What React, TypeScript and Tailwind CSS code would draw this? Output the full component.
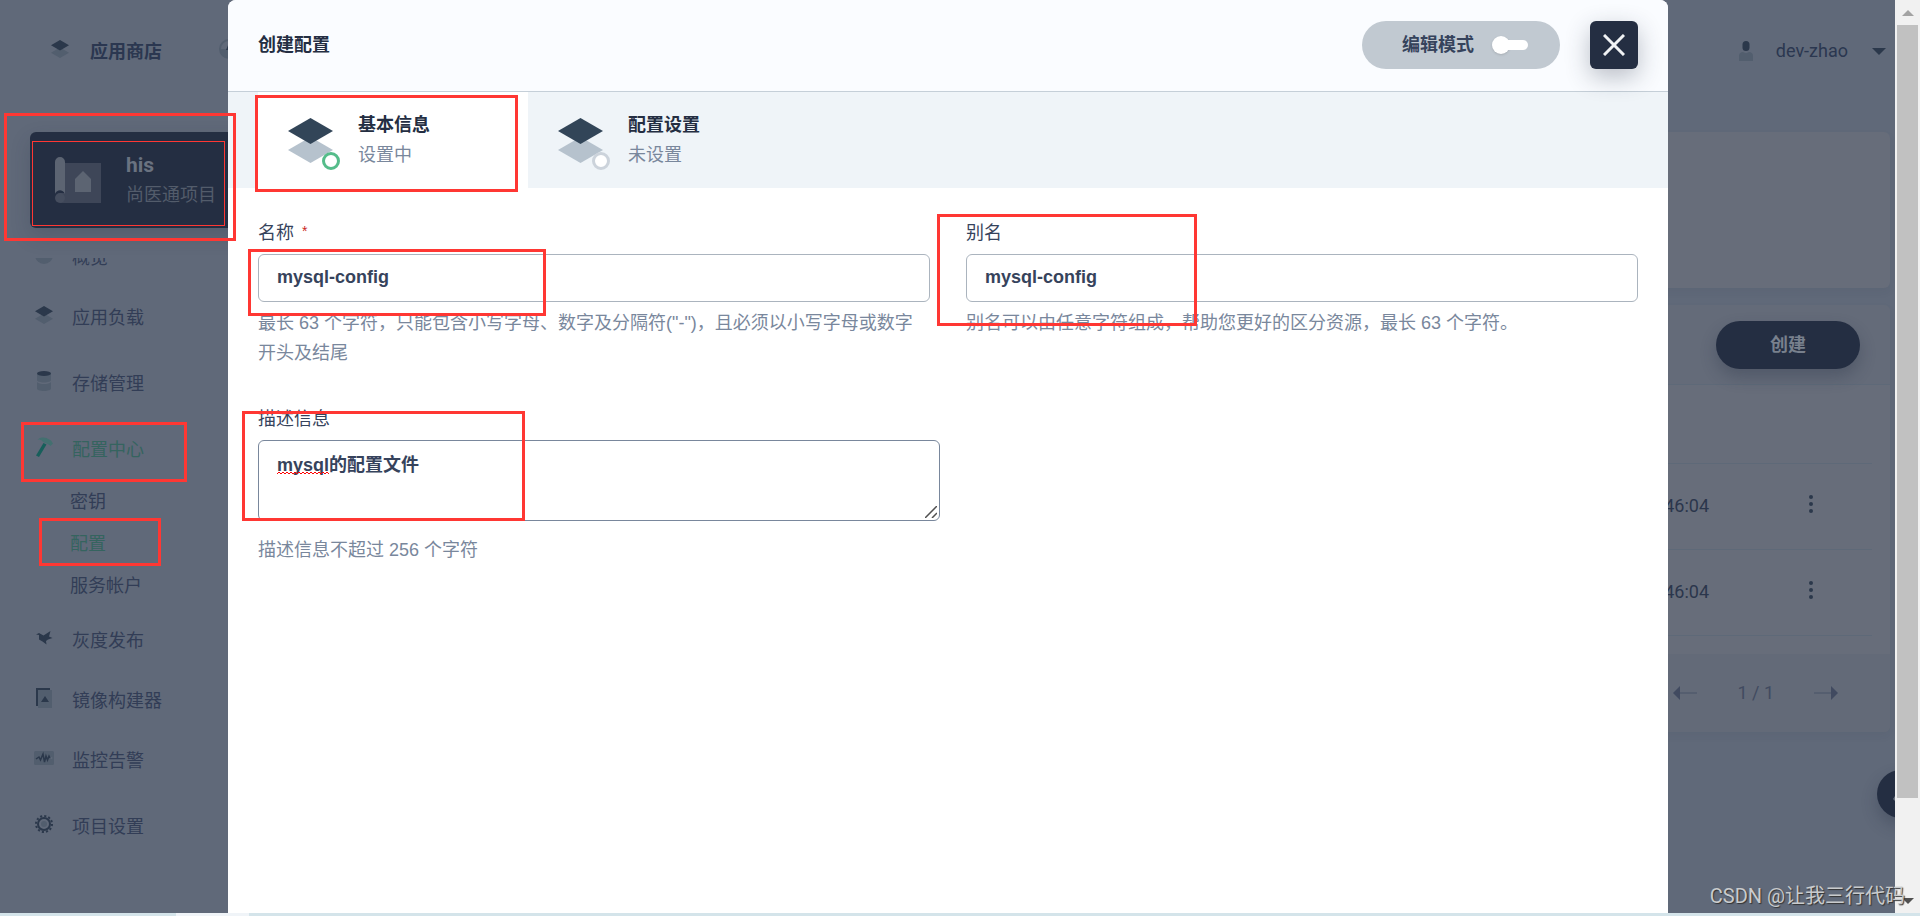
import type { ReactNode } from "react";

interface LayersProps {
  className: string;
  top: string;
  bottom: string;
}

function Layers({ className, top, bottom }: LayersProps) {
  return (
    <svg viewBox="0 0 45 45" className={className} aria-hidden="true">
      <path d="M0 32 22.5 19 45 32 22.5 45z" fill={bottom} />
      <path d="M0 13 22.5 0 45 13 22.5 26z" fill={top} />
    </svg>
  );
}

const DARK = "#2b384b";
const LIGHT = "#525e6e";

const ICONS: Record<string, ReactNode> = {
  overview: (
    <svg viewBox="0 0 20 20" className="size-5" aria-hidden="true">
      <circle cx="10" cy="10" r="9" fill={LIGHT} />
    </svg>
  ),
  storage: (
    <svg viewBox="0 0 20 20" className="size-5" aria-hidden="true">
      <path d="M3 3v6c0 1.400 3 2.500 7 2.500s7-1.100 7-2.500V3z" fill={LIGHT} />
      <path d="M3 11v6.500C3 19 6 20 10 20s7-1 7-2.500V11c-1 1.500-4 2-7 2s-6-.5-7-2z" fill={LIGHT} />
      <ellipse cx="10" cy="2.500" rx="7" ry="2.500" fill={DARK} />
    </svg>
  ),
  hammer: (
    <svg viewBox="0 0 20 20" className="size-5" aria-hidden="true">
      <path d="M9.500 6 12.500 7.500 5 20 2 18.500z" fill="#175f5b" />
      <path d="M3.500 2.500C6 0 10 0 12.500 1L17 3.500l2 3-2.500 2.500-2-1.500-5.500-2.500C8 3 6 2.500 3.500 2.500z" fill="#437070" />
    </svg>
  ),
  bird: (
    <svg viewBox="0 0 20 20" className="size-5" aria-hidden="true">
      <path d="M2 6.500 5 5l4.500 2.500L16.500 3l-1.500 5.500 3.500 1.500-4.500 1.500-2 1.500.5 3.500-4-3L5 11.500 5 7z" fill={DARK} />
    </svg>
  ),
  image: (
    <svg viewBox="0 0 20 20" className="size-5" aria-hidden="true">
      <path d="M4 2h14v18H4z" fill={LIGHT} />
      <path d="M2 0h14v2H4v16H2z" fill={DARK} />
      <path d="M11 8l4 6H7z" fill={DARK} />
    </svg>
  ),
  monitor: (
    <svg viewBox="0 0 20 20" className="size-5" aria-hidden="true">
      <rect y="3" width="20" height="14" rx="1.500" fill={LIGHT} />
      <path d="M2 11l3-2 1.500 3L9 6l1.500 8L12 8l1.500 4L15 8l1 2" fill="none" stroke={DARK} strokeWidth="1.500" />
      <circle cx="17.500" cy="10" r="1" fill="#606979" />
    </svg>
  ),
  gear: (
    <svg viewBox="0 0 20 20" className="size-5" aria-hidden="true">
      <circle cx="10" cy="10" r="8" fill="none" stroke={DARK} strokeWidth="2" strokeDasharray="2.100 2.089" />
      <circle cx="10" cy="10" r="6" fill="none" stroke={DARK} strokeWidth="2" />
      <circle cx="10" cy="10" r="3" fill={LIGHT} />
    </svg>
  ),
  layers: <Layers className="size-[18px]" top={DARK} bottom={LIGHT} />,
};

interface NavItemProps {
  icon: string;
  label: string;
  active?: boolean;
}

function NavItem({ icon, label, active }: NavItemProps) {
  return (
    <a href="#" className={`flex h-[54px] items-center gap-[18px] pl-[34px] ${active ? "text-[#35645f]" : "text-[#323d56]"}`}>
      <span className="flex w-5 justify-center pb-[6px]">{ICONS[icon]}</span>
      {label}
    </a>
  );
}

function SubItem({ label, active }: { label: string; active?: boolean }) {
  return (
    <a href="#" className={`flex h-[42px] items-center pl-[70px] ${active ? "text-[#35645f]" : "text-[#323d56]"}`}>
      {label}
    </a>
  );
}

function Sidebar() {
  return (
    <aside className="w-[268px] shrink-0 pt-[30px]">
      <div className="ml-[30px] flex h-24 items-center rounded-md bg-[#242e42] pl-[25px] shadow-[0_8px_20px_rgba(36,46,66,0.2)]">
        <svg viewBox="0 0 46 46" className="size-[46px]" aria-hidden="true">
          <path d="M9 6h37v40H5V36h4z" fill="#3e4658" />
          <path d="M0 40V5a5 5 0 0 1 10 0v32a5 5 0 0 0-10 3z" fill="#5c6472" />
          <circle cx="5" cy="41" r="5" fill="#454d5e" />
          <path d="M28 14l8 8v13H20V22z" fill="#5c6472" />
        </svg>
        <div className="pl-[25px]">
          <p className="text-[21px] leading-[30px] font-bold text-[#6a7280]">his</p>
          <p className="leading-[30px] text-[#535c6b]">尚医通项目</p>
        </div>
      </div>
      <nav className="mt-[30px] overflow-hidden">
        <div className="-mt-[27px] flex flex-col gap-3">
          <div className="flex flex-col gap-[6px]">
            <NavItem icon="overview" label="概览" />
            <NavItem icon="layers" label="应用负载" />
          </div>
          <NavItem icon="storage" label="存储管理" />
          <div className="flex flex-col gap-[6px]">
            <div className="pb-px">
              <NavItem icon="hammer" label="配置中心" active />
              <div className="pt-[4px]">
                <SubItem label="密钥" />
                <SubItem label="配置" active />
                <SubItem label="服务帐户" />
              </div>
            </div>
            <NavItem icon="bird" label="灰度发布" />
            <NavItem icon="image" label="镜像构建器" />
            <NavItem icon="monitor" label="监控告警" />
          </div>
          <NavItem icon="gear" label="项目设置" />
        </div>
      </nav>
    </aside>
  );
}

function TopBar() {
  return (
    <header className="flex h-[102px] items-center justify-between pr-[9px] pl-[51px]">
      <div className="flex items-center">
        <Layers className="mb-1 size-[18px]" top={DARK} bottom={LIGHT} />
        <a href="#" className="ml-[21px] pt-[2px] font-bold text-[#2b3750]">应用商店</a>
        <svg viewBox="0 0 20 20" className="mb-1 ml-[57px] size-5" aria-hidden="true">
          <circle cx="10" cy="10" r="9" fill="none" stroke={LIGHT} strokeWidth="2" />
          <path d="M1 10h18a9 9 0 0 1-18 0z" fill={LIGHT} />
          <path d="M7 11 10 4v7z" fill={DARK} />
        </svg>
      </div>
      <button type="button" className="flex items-center text-[#2b3750]">
        <svg viewBox="0 0 14 20" className="h-5 w-[14px]" aria-hidden="true">
          <rect x="3.500" y="0" width="7" height="10" rx="3.500" fill={DARK} />
          <path d="M0 20v-5c0-3 2-4 4-4 2 1.500 4 1.500 6 0 2 0 4 1 4 4v5z" fill={LIGHT} />
        </svg>
        <span className="ml-[23px]">dev-zhao</span>
        <svg viewBox="0 0 14 7" className="ml-[24px] h-[7px] w-[14px]" aria-hidden="true">
          <path d="M0 0h14L7 7z" fill={DARK} />
        </svg>
      </button>
    </header>
  );
}

function Row({ time }: { time: string }) {
  return (
    <tr className="h-[86px] border-b border-[#5e6978]">
      <td className="text-right text-[#2b364c]">{time}</td>
      <td className="w-[163px] pb-1 pl-[93px]">
        <button type="button" aria-label="更多" className="flex w-[18px] justify-center">
          <svg viewBox="0 0 4 18" className="h-[18px] w-1" fill={DARK} aria-hidden="true">
            <circle cx="2" cy="2" r="2" />
            <circle cx="2" cy="9" r="2" />
            <circle cx="2" cy="16" r="2" />
          </svg>
        </button>
      </td>
    </tr>
  );
}

function Content() {
  return (
    <main className="flex flex-1 flex-col gap-[17px] pt-[30px] pr-[5px] pl-5">
      <section className="h-[156px] rounded-md bg-[#676d7a] shadow-[0_4px_8px_rgba(36,46,66,0.06)]" />
      <section className="overflow-hidden rounded-md bg-[#676d7a] shadow-[0_4px_8px_rgba(36,46,66,0.06)]">
        <div className="flex h-20 items-center justify-end border-b border-[#5e6978] bg-[#646b79] pr-[30px]">
          <button type="button" className="h-12 w-36 rounded-full bg-[#242e42] font-bold text-[#78808d] shadow-[0_8px_16px_rgba(36,46,66,0.3)]">
            创建
          </button>
        </div>
        <div className="px-[18px] pb-[18px]">
          <table className="w-full border-collapse">
            <thead>
              <tr className="h-[78px] border-b border-[#5e6978]">
                <th />
                <th />
              </tr>
            </thead>
            <tbody>
              <Row time="46:04" />
              <Row time="46:04" />
            </tbody>
          </table>
        </div>
        <div className="flex h-[78px] items-center justify-end gap-10 bg-[#636a78] pr-[52px] text-[#414a60]">
          <button type="button" aria-label="上一页">
            <svg viewBox="0 0 24 14" className="h-[14px] w-6" aria-hidden="true">
              <path d="M0 7 7 0v14z" fill="#414a60" />
              <path d="M7 6h17v2H7z" fill="#555e6f" />
            </svg>
          </button>
          <span>1 / 1</span>
          <button type="button" aria-label="下一页">
            <svg viewBox="0 0 24 14" className="h-[14px] w-6" aria-hidden="true">
              <path d="M24 7l-7-7v14z" fill="#414a60" />
              <path d="M0 6h17v2H0z" fill="#555e6f" />
            </svg>
          </button>
        </div>
      </section>
    </main>
  );
}

interface StepProps {
  title: string;
  status: string;
  active?: boolean;
}

function Step({ title, status, active }: StepProps) {
  return (
    <button type="button" className={`flex w-[270px] items-center pl-[30px] text-left ${active ? "bg-white" : ""}`}>
      <span className="relative">
        <Layers className="size-[45px]" top="#324558" bottom="#b6c2cd" />
        <span className={`absolute -right-[7px] -bottom-[7px] size-[18px] rounded-full border-3 bg-white ${active ? "border-[#55bc8a]" : "border-[#ccd3db]"}`} />
      </span>
      <span className="flex flex-col pl-[25px] leading-[30px]">
        <span className="font-bold text-[#242e42]">{title}</span>
        <span className="text-[#79879c]">{status}</span>
      </span>
    </button>
  );
}

interface FieldProps {
  id: string;
  label: string;
  help: string;
  required?: boolean;
}

function Field({ id, label, help, required }: FieldProps) {
  return (
    <div>
      <label htmlFor={id} className="block pb-[6px] leading-[30px] text-[#36435c]">
        {label}
        {required && <span className="pl-2 align-text-top text-sm leading-4 text-[#ca2621]">*</span>}
      </label>
      <input
        id={id}
        type="text"
        defaultValue="mysql-config"
        className="block h-12 w-full rounded-md border border-[#abb4be] bg-white px-[18px] pb-[2px] font-bold text-[#36435c]"
      />
      <p className="pt-[6px] pr-3 leading-[30px] text-[#79879c]">{help}</p>
    </div>
  );
}

function CreateDialog() {
  return (
    <div role="dialog" aria-label="创建配置" className="relative flex w-[1440px] flex-col rounded-t-lg bg-white">
      <div className="flex h-[92px] items-center rounded-t-lg border-b border-[#c5cfd8] bg-[#fafcff] px-[30px] pb-px">
        <h1 className="flex-1 font-bold text-[#242e42]">创建配置</h1>
        <button type="button" className="flex h-12 w-[198px] items-center rounded-full bg-[#c1c9d1] pl-10 font-bold text-[#36435c]">
          编辑模式
          <span className="ml-[18px] flex items-center">
            <span className="size-[18px] rounded-full bg-white shadow-sm" />
            <span className="-ml-1 h-[10px] w-[22px] rounded-r-full bg-white" />
          </span>
        </button>
        <button type="button" aria-label="关闭" className="z-10 ml-[30px] flex size-12 items-center justify-center rounded-md bg-[#242e42] shadow-[0_8px_24px_rgba(36,46,66,0.3)]">
          <svg viewBox="0 0 22 22" className="size-[22px]" stroke="#f0f2f4" strokeWidth="3" aria-hidden="true">
            <path d="M1 1 21 21M21 1 1 21" />
          </svg>
        </button>
      </div>
      <div className="flex h-24 bg-[#eff4f8] px-[30px]">
        <Step title="基本信息" status="设置中" active />
        <Step title="配置设置" status="未设置" />
      </div>
      <form className="grid grid-cols-2 gap-x-9 px-[30px] pt-[30px] font-['Liberation_Sans','Noto_Sans_CJK_SC',sans-serif]">
        <Field
          id="name"
          label="名称"
          required
          help={'最长 63 个字符，只能包含小写字母、数字及分隔符("-")，且必须以小写字母或数字开头及结尾'}
        />
        <Field id="alias" label="别名" help="别名可以由任意字符组成，帮助您更好的区分资源，最长 63 个字符。" />
        <div className="pt-9">
          <label htmlFor="desc" className="block pb-[6px] leading-[30px] text-[#36435c]">
            描述信息
          </label>
          <div className="relative -mr-[10px]">
            <textarea
              id="desc"
              spellCheck={false}
              defaultValue="mysql的配置文件"
              className="block h-[81px] w-full resize-none rounded-md border border-[#79879c] bg-white px-[18px] py-[9px] leading-[30px] font-bold text-[#36435c]"
            />
            <svg viewBox="0 0 52 4" className="absolute top-[31px] left-[19px] h-1 w-[52px]" fill="none" stroke="#f00" aria-hidden="true">
              <path d="M0 3l2-2 2 2 2-2 2 2 2-2 2 2 2-2 2 2 2-2 2 2 2-2 2 2 2-2 2 2 2-2 2 2 2-2 2 2 2-2 2 2 2-2 2 2 2-2 2 2 2-2 2 2" />
            </svg>
            <svg viewBox="0 0 12 12" className="absolute right-[3px] bottom-[3px] size-3" stroke="#505050" strokeWidth="1.500" aria-hidden="true">
              <path d="M0 12 12 0M7 12l5-5" />
            </svg>
          </div>
          <p className="pt-[14px] leading-[30px] text-[#79879c]">描述信息不超过 256 个字符</p>
        </div>
      </form>

      <Mark className="top-[95px] left-[27px] h-[97px] w-[263px]" />
      <Mark className="top-[249px] left-[20px] h-[67px] w-[298px]" />
      <Mark className="top-[214px] left-[709px] h-[112px] w-[260px]" />
      <Mark className="top-[411px] left-[14px] h-[110px] w-[283px]" />
    </div>
  );
}

/* Red outline drawn over the spots to look at */
function Mark({ className }: { className: string }) {
  return <div className={`pointer-events-none absolute z-20 border-3 border-[#ff3733] ${className}`} />;
}

function Scrollbar() {
  return (
    <div className="flex w-[25px] flex-col items-center justify-between bg-[#f1f1f1]" aria-hidden="true">
      <div className="flex h-[25px] items-center">
        <svg viewBox="0 0 12 6" className="h-[6px] w-3">
          <path d="M0 6h12L6 0z" fill="#a3a3a3" />
        </svg>
      </div>
      <div className="mb-[90px] w-[21px] flex-1 bg-[#c1c1c1]" />
      <div className="flex h-[25px] items-start pt-[10px]">
        <svg viewBox="0 0 12 6" className="h-[6px] w-3">
          <path d="M0 0h12L6 6z" fill="#505050" />
        </svg>
      </div>
    </div>
  );
}

export default function App() {
  return (
    <div className="relative flex h-screen flex-col overflow-hidden font-[Roboto,'Noto_Sans_CJK_SC',sans-serif] text-lg">
      <div className="flex min-h-0 flex-1">
        <div className="relative flex-1 overflow-hidden bg-[#606979]">
          <TopBar />
          <div className="flex">
            <Sidebar />
            <Content />
          </div>
          <button
            type="button"
            aria-label="工具箱"
            className="absolute top-[770px] -right-[30px] size-12 rounded-full bg-[#242e42] shadow-[0_8px_16px_rgba(36,46,66,0.3)]"
          >
            <svg viewBox="0 0 48 48" className="size-12" aria-hidden="true">
              <path d="M16 29l2-3v5z" fill="#6a7280" />
            </svg>
          </button>
          <div className="absolute inset-0 flex justify-center pl-px">
            <CreateDialog />
          </div>
          <Mark className="top-[113px] left-1 h-32 w-[232px]" />
          <div className="absolute top-[141px] left-8 h-[85px] w-[193px] border border-[#ff3733]" />
          <Mark className="top-[422px] left-[21px] h-[60px] w-[166px]" />
          <Mark className="top-[518px] left-[39px] h-12 w-[122px]" />
        </div>
        <Scrollbar />
      </div>
      <div className="flex h-[3px] bg-[#d4e4ea]">
        <div className="ml-44 w-[73px] bg-[#f0f4f8]" />
      </div>
      <p className="absolute right-[15px] bottom-[5px] z-30 text-xl leading-[30px] text-[#c9cbcd] [text-shadow:1px_1px_1px_#333]">
        CSDN @让我三行代码
      </p>
    </div>
  );
}
